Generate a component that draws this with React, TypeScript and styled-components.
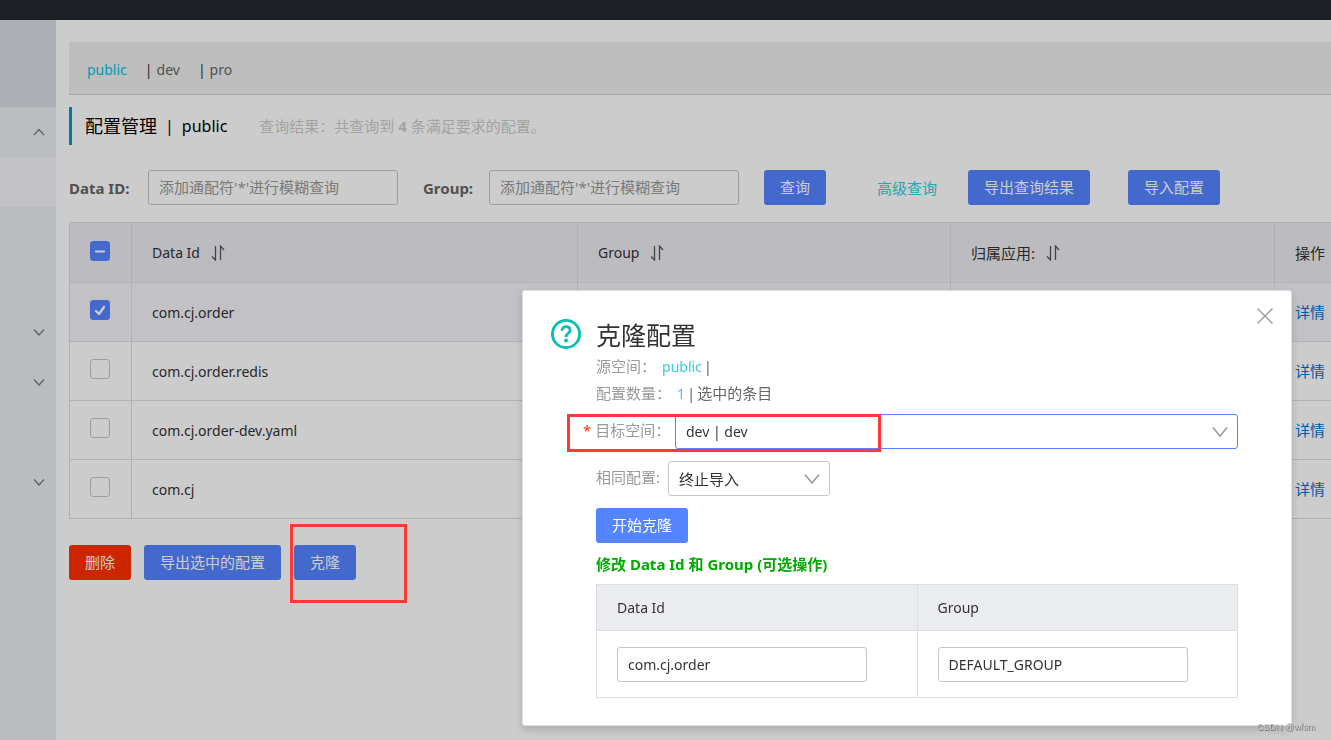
import React from 'react';
import styled, { createGlobalStyle, css } from 'styled-components';

const GlobalStyle = createGlobalStyle`
  *, *::before, *::after { box-sizing: border-box; }
  body {
    margin: 0;
    background: #fff;
    color: #333;
    font-family: "Noto Sans", "Noto Sans CJK SC", sans-serif;
    font-size: 15px;
    line-height: 20px;
    overflow: hidden;
  }
  button, input, select { font: inherit; color: inherit; }
  a { text-decoration: none; }
`;

const Page = styled.div`
  display: flex;
  flex-direction: column;
  min-height: 100vh;
`;

const TopBar = styled.header`
  height: 20px;
  background: #252a2f;
`;

const Body = styled.div`
  flex: 1;
  display: flex;
`;

const Sidebar = styled.nav`
  flex: 0 0 56px;
  background: #e8edf1;
`;

const SidebarHead = styled.div`
  height: 87px;
  background: #d7dce2;
`;

const SidebarItem = styled.div<{ $tone?: string }>`
  height: 50px;
  display: flex;
  align-items: center;
  justify-content: flex-end;
  padding-right: 11px;
  background: ${p => p.$tone || 'transparent'};
`;

const IconButton = styled.button`
  display: flex;
  padding: 0;
  border: 0;
  background: none;
  cursor: pointer;
`;

const Main = styled.main`
  flex: 1;
  min-width: 0;
  padding: 22px 0 0 13px;
`;

const NamespaceBar = styled.div`
  display: flex;
  align-items: center;
  height: 53px;
  padding: 3px 0 0 18px;
  background: #eee;
  border-bottom: 1px solid #ccc;
  font-size: 14px;
`;

const NamespaceItem = styled.div`
  display: flex;
  gap: 4px;
  margin-right: 18px;
`;

const NamespaceLink = styled.a<{ $active?: boolean }>`
  color: ${p => (p.$active ? '#00c1de' : '#666')};
`;

const TitleRow = styled.div`
  display: flex;
  align-items: center;
  height: 38px;
  margin-top: 12px;
  padding-left: 13px;
  border-left: 3px solid #09c;
`;

const Title = styled.h1`
  display: flex;
  align-items: center;
  gap: 8px;
  margin: 0 32px 0 0;
  font-size: 18px;
  font-weight: 400;
  color: #000;
`;

const TitleName = styled.span`
  font-size: 16px;
`;

const ResultText = styled.span`
  color: #ccc;
`;

const SearchRow = styled.form`
  display: flex;
  align-items: center;
  margin-top: 25px;
`;

const SearchLabel = styled.label<{ $width: number }>`
  flex: 0 0 ${p => p.$width}px;
  font-weight: 700;
  color: #666;
`;

const TextInput = styled.input`
  width: 250px;
  height: 35px;
  padding: 0 10px;
  border: 1px solid #c4c6cf;
  border-radius: 3px;
  background: transparent;
  outline: none;
  &::placeholder { color: #999; opacity: 1; }
`;

const SearchInput = styled(TextInput)`
  margin-right: 25px;
  padding-bottom: 2px;
`;

const Button = styled.button<{ $danger?: boolean }>`
  height: 35px;
  padding: 0 16px 2px;
  border: 0;
  border-radius: 3px;
  background: ${p => (p.$danger ? '#ff3000' : '#5584ff')};
  color: #fff;
  white-space: nowrap;
  cursor: pointer;
`;

const AdvancedLink = styled.a`
  margin: 0 31px 0 51px;
  color: #33cde5;
  white-space: nowrap;
`;

const ImportButton = styled(Button)`
  margin-left: 38px;
`;

const ConfigTable = styled.table`
  width: 100%;
  margin-top: 17px;
  border-collapse: collapse;
  table-layout: fixed;
  th, td {
    padding: 0 0 0 20px;
    border: solid #dcdee3;
    border-width: 1px 0 1px 1px;
    text-align: left;
    font-weight: 400;
    white-space: nowrap;
  }
  th { height: 60px; background: #ebecf0; }
  td { height: 59px; }
`;

const Row = styled.tr<{ $selected?: boolean }>`
  background: ${p => (p.$selected ? '#f3f2f8' : 'transparent')};
`;

const Col = styled.col<{ $width?: number }>`
  ${p => p.$width && css`width: ${p.$width}px;`}
`;

const Latin = styled.span`
  font-size: 14px;
`;

const SortHeading = styled.span`
  display: flex;
  align-items: center;
  gap: 11px;
`;

const DetailLink = styled.a`
  color: #0070cc;
`;

const CheckWrap = styled.label`
  display: grid;
  width: 20px;
  height: 20px;
  margin-bottom: 4px;
  > * { grid-area: 1 / 1; }
`;

const CheckInput = styled.input<{ $filled: boolean }>`
  appearance: none;
  width: 20px;
  height: 20px;
  margin: 0;
  border: 1px solid ${p => (p.$filled ? '#5584ff' : '#c4c6cf')};
  border-radius: 3px;
  background: ${p => (p.$filled ? '#5584ff' : '#fff')};
`;

const CheckMark = styled.svg`
  pointer-events: none;
`;

const Actions = styled.div`
  display: flex;
  gap: 13px;
  margin-top: 26px;
`;

const Marked = styled.div`
  position: relative;
`;

const RedFrame = styled.div<{ $box: [number, number, number, number] }>`
  position: absolute;
  z-index: 30;
  left: ${p => p.$box[0]}px;
  top: ${p => p.$box[1]}px;
  width: ${p => p.$box[2]}px;
  height: ${p => p.$box[3]}px;
  border: 3px solid #ff3838;
  pointer-events: none;
`;

const Backdrop = styled.div`
  position: fixed;
  inset: 0;
  z-index: 10;
  display: flex;
  justify-content: flex-end;
  align-items: flex-start;
  padding: 290px 39px 0 0;
  background: rgba(0, 0, 0, 0.2);
`;

const Dialog = styled.section`
  position: relative;
  display: flex;
  align-items: flex-start;
  gap: 15px;
  flex: 0 1 770px;
  padding: 28px 53px 27px 28px;
  background: #fff;
  border: 1px solid #dcdee3;
  border-radius: 3px;
  box-shadow: 0 4px 8px rgba(0, 0, 0, 0.16);
`;

const CloseButton = styled(IconButton)`
  position: absolute;
  top: 17px;
  right: 18px;
`;

const DialogBody = styled.div`
  flex: 1;
  min-width: 0;
`;

const DialogTitle = styled.h2`
  margin: 0 0 2px;
  font-size: 25px;
  line-height: 32px;
  font-weight: 400;
`;

const InfoLine = styled.p`
  display: flex;
  gap: 2px;
  margin: 0;
  color: #666;
  line-height: 27px;
`;

const Muted = styled.span`
  color: #999;
  margin-right: 4px;
`;

const Accent = styled.span`
  color: #33cde5;
  font-size: 14px;
`;

const Fields = styled.div`
  margin-top: 7px;
`;

const FieldRow = styled.div`
  position: relative;
  display: flex;
  height: 35px;
  margin-bottom: 12px;
`;

const FieldLabel = styled.label<{ $width: number; $required?: boolean }>`
  flex: 0 0 ${p => p.$width}px;
  line-height: 32px;
  color: #999;
  white-space: nowrap;
  ${p => p.$required && css`
    margin-left: -13px;
    &::before { content: '*'; margin-right: 4px; color: #ff3000; }
  `}
`;

const SelectWrap = styled.div<{ $width?: number }>`
  display: grid;
  align-items: center;
  flex: ${p => (p.$width ? `0 0 ${p.$width}px` : '1')};
  > * { grid-area: 1 / 1; }
  > svg { justify-self: end; margin-right: 10px; pointer-events: none; }
`;

const Select = styled.select<{ $focused?: boolean }>`
  appearance: none;
  width: 100%;
  height: 35px;
  padding: 0 10px;
  border: 1px solid ${p => (p.$focused ? '#5584ff' : '#c4c6cf')};
  border-radius: 3px;
  background: #fff;
  outline: none;
`;

const LatinSelect = styled(Select)`
  font-size: 14px;
`;

const Hint = styled.p`
  margin: 11px 0 10px;
  font-weight: 700;
  color: #0a0;
`;

const CloneTable = styled.table`
  width: 100%;
  border-collapse: collapse;
  table-layout: fixed;
  font-size: 14px;
  th, td {
    padding: 0 20px;
    border: 1px solid #dcdee3;
    text-align: left;
    font-weight: 400;
  }
  th { height: 46px; background: #ebecf0; }
  td { height: 67px; }
  input { display: block; max-width: 100%; }
`;

const Watermark = styled.div`
  position: fixed;
  z-index: 40;
  right: 16px;
  bottom: 7px;
  font: 9px/12px "Liberation Sans", sans-serif;
  color: #c4c4c4;
  text-shadow: 1px 1px 0 #777;
`;

const Chevron = ({ up, size = 10, color = '#777' }: { up?: boolean; size?: number; color?: string }) => (
  <svg width={size + 2} height={size + 2} viewBox="0 0 12 12" fill="none" stroke={color}>
    <path d={up ? 'M1 9 6 3.5 11 9' : 'M1 3.5 6 9 11 3.5'} strokeWidth="1.2" />
  </svg>
);

const SortIcon = () => (
  <svg width="14" height="16" viewBox="0 0 14 16" fill="none" stroke="#555" strokeWidth="1.3">
    <path d="M4.5 1v14L1 11.5M9.5 15V1L13 5" />
  </svg>
);

const SelectArrow = () => (
  <svg width="16" height="16" viewBox="0 0 16 16" fill="none" stroke="#999" strokeWidth="1.5">
    <path d="M1 3.5 8 12 15 3.5" />
  </svg>
);

const Checkbox = ({ state, label }: { state: 'on' | 'off' | 'mixed'; label: string }) => (
  <CheckWrap>
    <CheckInput
      type="checkbox"
      aria-label={label}
      $filled={state !== 'off'}
      defaultChecked={state === 'on'}
      ref={el => { if (el) el.indeterminate = state === 'mixed'; }}
    />
    {state !== 'off' && (
      <CheckMark width="20" height="20" viewBox="0 0 20 20" fill="none" stroke="#fff" strokeLinecap="round" strokeLinejoin="round">
        {state === 'on'
          ? <path d="M6 11 9 14 14 7" strokeWidth="2.4" />
          : <path d="M6 10.5h8" strokeWidth="2.2" />}
      </CheckMark>
    )}
  </CheckWrap>
);

const Sorted = ({ children }: { children: React.ReactNode }) => (
  <SortHeading>
    {children}
    <IconButton type="button" aria-label="排序"><SortIcon /></IconButton>
  </SortHeading>
);

const menu: Array<{ icon?: 'up' | 'down'; tone?: string }> = [
  { icon: 'up', tone: '#e9eef1' },
  { tone: '#f3f2f8' },
  {},
  {},
  { icon: 'down' },
  { icon: 'down' },
  {},
  { icon: 'down' },
];

const configs = ['com.cj.order', 'com.cj.order.redis', 'com.cj.order-dev.yaml', 'com.cj'];

export default function App() {
  return (
    <>
      <GlobalStyle />
      <Page>
        <TopBar />
        <Body>
          <Sidebar>
            <SidebarHead />
            {menu.map((m, i) => (
              <SidebarItem key={i} $tone={m.tone}>
                {m.icon && (
                  <IconButton type="button" aria-label="展开">
                    <Chevron up={m.icon === 'up'} />
                  </IconButton>
                )}
              </SidebarItem>
            ))}
          </Sidebar>
          <Main>
            <NamespaceBar>
              <NamespaceItem><NamespaceLink href="#public" $active>public</NamespaceLink></NamespaceItem>
              <NamespaceItem><span>|</span><NamespaceLink href="#dev">dev</NamespaceLink></NamespaceItem>
              <NamespaceItem><span>|</span><NamespaceLink href="#pro">pro</NamespaceLink></NamespaceItem>
            </NamespaceBar>
            <TitleRow>
              <Title>配置管理<TitleName>|</TitleName><TitleName>public</TitleName></Title>
              <ResultText>查询结果：共查询到 <b>4</b> 条满足要求的配置。</ResultText>
            </TitleRow>
            <SearchRow>
              <SearchLabel htmlFor="data-id" $width={79}>Data ID:</SearchLabel>
              <SearchInput id="data-id" placeholder="添加通配符'*'进行模糊查询" />
              <SearchLabel htmlFor="group" $width={66}>Group:</SearchLabel>
              <SearchInput id="group" placeholder="添加通配符'*'进行模糊查询" />
              <Button type="button">查询</Button>
              <AdvancedLink href="#advanced">高级查询</AdvancedLink>
              <Button type="button">导出查询结果</Button>
              <ImportButton type="button">导入配置</ImportButton>
            </SearchRow>
            <ConfigTable>
              <colgroup>
                <Col $width={62} />
                <Col $width={446} />
                <Col $width={373} />
                <Col $width={324} />
                <Col />
              </colgroup>
              <thead>
                <tr>
                  <th><Checkbox state="mixed" label="全选" /></th>
                  <th><Sorted><Latin>Data Id</Latin></Sorted></th>
                  <th><Sorted><Latin>Group</Latin></Sorted></th>
                  <th><Sorted>归属应用:</Sorted></th>
                  <th>操作</th>
                </tr>
              </thead>
              <tbody>
                {configs.map((name, i) => (
                  <Row key={name} $selected={i === 0}>
                    <td><Checkbox state={i === 0 ? 'on' : 'off'} label={name} /></td>
                    <td><Latin>{name}</Latin></td>
                    <td />
                    <td />
                    <td><DetailLink href="#detail">详情</DetailLink></td>
                  </Row>
                ))}
              </tbody>
            </ConfigTable>
            <Actions>
              <Button type="button" $danger>删除</Button>
              <Button type="button">导出选中的配置</Button>
              <Marked>
                <Button type="button">克隆</Button>
                <RedFrame $box={[-4, -21, 117, 79]} />
              </Marked>
            </Actions>
          </Main>
        </Body>
      </Page>
      <Backdrop>
        <Dialog role="dialog" aria-labelledby="clone-title">
          <svg width="30" height="30" viewBox="0 0 30 30" fill="none" stroke="#00c1b2">
            <circle cx="15" cy="15" r="13.6" strokeWidth="2.8" />
            <path d="M11 11.8C11 9 12.6 7.6 15 7.6S19.1 9 19.1 11.4C19.1 14.2 15 14.4 15 18" strokeWidth="2.8" />
            <circle cx="15" cy="21.5" r="1.9" fill="#00c1b2" stroke="none" />
          </svg>
          <DialogBody>
            <DialogTitle id="clone-title">克隆配置</DialogTitle>
            <InfoLine><Muted>源空间：</Muted><Accent>public</Accent><span>|</span></InfoLine>
            <InfoLine><Muted>配置数量：</Muted><Accent>1</Accent><span>|</span><span>选中的条目</span></InfoLine>
            <Fields>
              <FieldRow>
                <FieldLabel htmlFor="target" $width={92} $required>目标空间：</FieldLabel>
                <SelectWrap>
                  <LatinSelect id="target" $focused><option>dev | dev</option></LatinSelect>
                  <SelectArrow />
                </SelectWrap>
                <RedFrame $box={[-29, 0, 314, 38]} />
              </FieldRow>
              <FieldRow>
                <FieldLabel htmlFor="policy" $width={72}>相同配置:</FieldLabel>
                <SelectWrap $width={162}>
                  <Select id="policy"><option>终止导入</option></Select>
                  <SelectArrow />
                </SelectWrap>
              </FieldRow>
            </Fields>
            <Button type="button">开始克隆</Button>
            <Hint>修改 Data Id 和 Group (可选操作)</Hint>
            <CloneTable>
              <thead>
                <tr><th>Data Id</th><th>Group</th></tr>
              </thead>
              <tbody>
                <tr>
                  <td><TextInput aria-label="Data Id" defaultValue="com.cj.order" /></td>
                  <td><TextInput aria-label="Group" defaultValue="DEFAULT_GROUP" /></td>
                </tr>
              </tbody>
            </CloneTable>
          </DialogBody>
          <CloseButton type="button" aria-label="关闭">
            <svg width="16" height="16" viewBox="0 0 16 16" fill="none" stroke="#999" strokeWidth="1.3">
              <path d="M.5.5l15 15M15.5.5l-15 15" />
            </svg>
          </CloseButton>
        </Dialog>
      </Backdrop>
      <Watermark>CSDN @wfsm</Watermark>
    </>
  );
}
